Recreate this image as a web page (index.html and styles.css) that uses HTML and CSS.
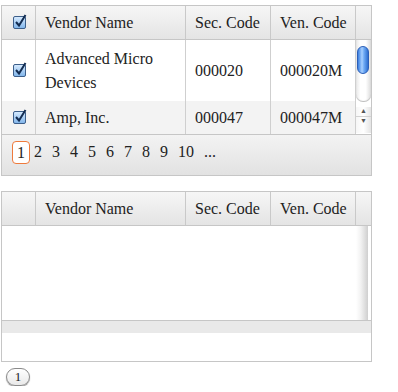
FILE: index.html
```html
<!DOCTYPE html>
<html>
	<head>
		<title>Vendor Grid</title>
		<link rel="stylesheet" href="styles.css">
	</head>
	<body>

		<div class="grid">
			<div class="head">
				<div class="cell c1"><svg class="chk" width="14" height="16" viewBox="0 0 14 16"><rect x="0.5" y="3.5" width="12" height="12" rx="1.5" fill="url(#g1)" stroke="#3d5f8a"/><path d="M3 9 L6 12.5 L12.5 2" fill="none" stroke="#132d52" stroke-width="2"/><defs><linearGradient id="g1" x1="0" y1="0" x2="0" y2="1"><stop offset="0" stop-color="#d9ecff"/><stop offset="1" stop-color="#7fb4ea"/></linearGradient></defs></svg></div>
				<div class="cell c2">Vendor Name</div>
				<div class="cell c3">Sec. Code</div>
				<div class="cell c4">Ven. Code</div>
				<div class="cell c5"></div>
			</div>
			<div class="body">
				<div class="rows">
					<div class="row tall">
						<div class="cell c1"><svg class="chk" width="14" height="16" viewBox="0 0 14 16"><rect x="0.5" y="3.5" width="12" height="12" rx="1.5" fill="url(#g1)" stroke="#3d5f8a"/><path d="M3 9 L6 12.5 L12.5 2" fill="none" stroke="#132d52" stroke-width="2"/></svg></div>
						<div class="cell c2">Advanced Micro<br>Devices</div>
						<div class="cell c3">000020</div>
						<div class="cell c4">000020M</div>
					</div>
					<div class="row alt">
						<div class="cell c1"><svg class="chk" width="14" height="16" viewBox="0 0 14 16"><rect x="0.5" y="3.5" width="12" height="12" rx="1.5" fill="url(#g1)" stroke="#3d5f8a"/><path d="M3 9 L6 12.5 L12.5 2" fill="none" stroke="#132d52" stroke-width="2"/></svg></div>
						<div class="cell c2">Amp, Inc.</div>
						<div class="cell c3">000047</div>
						<div class="cell c4">000047M</div>
					</div>
				</div>
				<div class="vscroll">
					<div class="track"><div class="thumb"></div></div>
					<div class="arrow up">&#9650;</div>
					<div class="arrow down">&#9660;</div>
				</div>
			</div>
			<div class="pager">
				<span class="page current">1</span>
				<span class="page">2</span>
				<span class="page">3</span>
				<span class="page">4</span>
				<span class="page">5</span>
				<span class="page">6</span>
				<span class="page">7</span>
				<span class="page">8</span>
				<span class="page">9</span>
				<span class="page">10</span>
				<span class="page">...</span>
			</div>
		</div>

		<div class="grid second">
			<div class="head">
				<div class="cell c1"></div>
				<div class="cell c2">Vendor Name</div>
				<div class="cell c3">Sec. Code</div>
				<div class="cell c4">Ven. Code</div>
				<div class="cell c5"></div>
			</div>
			<div class="body empty">
				<div class="rows"></div>
				<div class="vtrack"></div>
			</div>
			<div class="hbar"></div>
			<div class="foot"></div>
		</div>

		<div class="mini">1</div>

	</body>
</html>
```

FILE: styles.css
```css
body {
	margin: 0;
	padding: 5px 0 0 1px;
	font-family: "Liberation Serif", "Times New Roman", serif;
	font-size: 16px;
	color: #222;
	background-color: white;
}

.grid {
	width: 369px;
	border: 1px solid #c6c6c6;
	background-color: white;
}

.second {
	margin-top: 15px;
}

.head {
	display: flex;
	height: 33px;
	border-bottom: 1px solid #c6c6c6;
	background: linear-gradient(#f6f6f6, #e4e4e4);
}

.cell {
	box-sizing: border-box;
	border-right: 1px solid #cfcfcf;
	display: flex;
	align-items: center;
	padding-left: 9px;
}

.head .cell {
	border-right-color: #c9c9c9;
}

.c1 { width: 34px; padding-left: 11px; }
.c2 { width: 150px; }
.c3 { width: 85px; }
.c4 { width: 85px; }
.c5 { width: 15px; border-right: none; }

.chk {
	display: block;
	margin-top: -3px;
}

.body {
	display: flex;
	border-bottom: 1px solid #c6c6c6;
}

.rows {
	width: 354px;
}

.row {
	display: flex;
	height: 33px;
}

.row .cell {
	height: 100%;
}

.row.tall {
	height: 61px;
	line-height: 24px;
}

.row.alt {
	background-color: #f3f3f3;
}

.vscroll {
	width: 15px;
	display: flex;
	flex-direction: column;
}

.track {
	height: 62px;
	padding-top: 6px;
	box-sizing: border-box;
	border-radius: 0 0 7px 7px;
	background: linear-gradient(to right, #e8e8e8, #ffffff 30%, #ffffff 65%, #dcdcdc);
	box-shadow: inset 0 -1px 1px #bbb;
}

.thumb {
	width: 12px;
	height: 28px;
	margin-left: 1px;
	border-radius: 6px;
	border: 1px solid #2c5fb8;
	box-sizing: border-box;
	background: linear-gradient(to right, #3a7fe0, #a8d0ff 40%, #6eaaf5 60%, #2f6fd0);
}

.arrow {
	height: 9px;
	font-size: 7px;
	line-height: 9px;
	text-align: center;
	color: #555;
	background: linear-gradient(to right, #f6f6f6, #ffffff, #e4e4e4);
}

.arrow.up {
	margin-top: 5px;
	border-bottom: 1px solid #d2d2d2;
}

.arrow.down {
	height: 16px;
}

.pager {
	height: 40px;
	box-sizing: border-box;
	padding: 6px 0 0 10px;
	display: flex;
	align-items: flex-start;
	background: linear-gradient(#f3f3f3, #e2e2e2);
}

.page {
	line-height: 21px;
	margin-right: 10px;
}

.current {
	width: 16px;
	text-align: center;
	border: 1px solid #ee7a3c;
	border-radius: 4px;
	background-color: white;
	margin-right: 4px;
}

.empty {
	height: 94px;
}

.vtrack {
	width: 12px;
	background: linear-gradient(to right, #ffffff, #f2f2f2 40%, #cfcfcf);
}

.hbar {
	height: 12px;
	background-color: #e9e9e9;
}

.foot {
	height: 28px;
}

.mini {
	width: 22px;
	height: 16px;
	margin: 6px 0 0 5px;
	border: 1px solid #8a8a8a;
	border-radius: 9px;
	font-size: 13px;
	line-height: 16px;
	text-align: center;
	background: linear-gradient(#ffffff, #e9e9e9);
	box-shadow: 0 1px 1px #999;
}
```
